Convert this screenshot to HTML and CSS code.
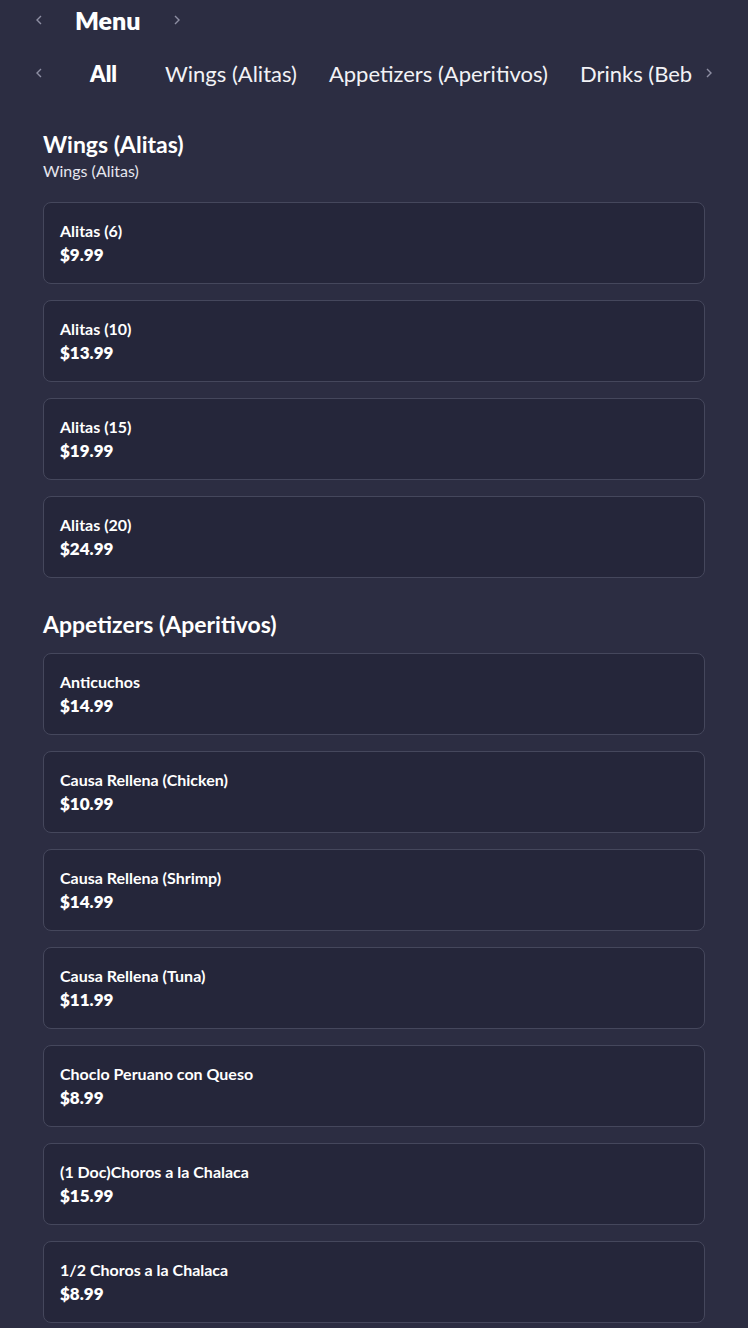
FILE: index.html
```html
<!DOCTYPE html>
<html>
<head>
<meta charset="utf-8">
<link rel="stylesheet" href="styles.css">
</head>
<body>
<div class="page">
  <div class="top">
    <span class="chev"><svg width="8" height="12" viewBox="0 0 8 12"><polyline points="6,2 2,6 6,10" fill="none" stroke="currentColor" stroke-width="1.4"/></svg></span>
    <h1 class="title">Menu</h1>
    <span class="chev"><svg width="8" height="12" viewBox="0 0 8 12"><polyline points="2,2 6,6 2,10" fill="none" stroke="currentColor" stroke-width="1.4"/></svg></span>
  </div>
  <div class="tabs-row">
    <span class="chev"><svg width="8" height="12" viewBox="0 0 8 12"><polyline points="6,2 2,6 6,10" fill="none" stroke="currentColor" stroke-width="1.4"/></svg></span>
    <div class="tabs">
      <span class="tab tab-active">All</span>
      <span class="tab">Wings (Alitas)</span>
      <span class="tab">Appetizers (Aperitivos)</span>
      <span class="tab">Drinks (Bebidas)</span>
    </div>
    <span class="chev"><svg width="8" height="12" viewBox="0 0 8 12"><polyline points="2,2 6,6 2,10" fill="none" stroke="currentColor" stroke-width="1.4"/></svg></span>
  </div>

  <section class="section">
    <h2 class="sec-title">Wings (Alitas)</h2>
    <p class="sec-sub">Wings (Alitas)</p>
    <div class="cards">
      <div class="card"><div class="name">Alitas (6)</div><div class="price">$9.99</div></div>
      <div class="card"><div class="name">Alitas (10)</div><div class="price">$13.99</div></div>
      <div class="card"><div class="name">Alitas (15)</div><div class="price">$19.99</div></div>
      <div class="card"><div class="name">Alitas (20)</div><div class="price">$24.99</div></div>
    </div>
  </section>

  <section class="section">
    <h2 class="sec-title sec-title-nosub">Appetizers (Aperitivos)</h2>
    <div class="cards">
      <div class="card"><div class="name">Anticuchos</div><div class="price">$14.99</div></div>
      <div class="card"><div class="name">Causa Rellena (Chicken)</div><div class="price">$10.99</div></div>
      <div class="card"><div class="name">Causa Rellena (Shrimp)</div><div class="price">$14.99</div></div>
      <div class="card"><div class="name">Causa Rellena (Tuna)</div><div class="price">$11.99</div></div>
      <div class="card"><div class="name">Choclo Peruano con Queso</div><div class="price">$8.99</div></div>
      <div class="card"><div class="name">(1 Doc)Choros a la Chalaca</div><div class="price">$15.99</div></div>
      <div class="card"><div class="name">1/2 Choros a la Chalaca</div><div class="price">$8.99</div></div>
    </div>
  </section>
</div>
</body>
</html>
```

FILE: styles.css
```css
* { box-sizing: border-box; }
html, body {
  margin: 0;
  padding: 0;
  background: #2c2d42;
}
body {
  font-family: "Lato", "Noto Sans", sans-serif;
  color: #ffffff;
  overflow: hidden;
}
.page {
  padding: 0 43px 0 43px;
}
.top {
  display: flex;
  align-items: center;
  height: 40px;
  margin-left: -10px;
}
.chev {
  flex: none;
  display: flex;
  align-items: center;
  justify-content: center;
  width: 12px;
  height: 16px;
  color: #8e8fa3;
}
.title {
  margin: 0 30px 0 30px;
  font-size: 25px;
  font-weight: 800;
  letter-spacing: 0;
}
.tabs-row {
  display: flex;
  align-items: center;
  height: 66px;
  margin: 0 -10px 0 -10px;
}
.tabs {
  flex: 1;
  display: flex;
  overflow: hidden;
  white-space: nowrap;
  margin: 0 11px 0 13px;
}
.tab {
  flex: none;
  padding: 0 16px;
  font-size: 22px;
  font-weight: 400;
  color: #f2f2f6;
}
.tab-active {
  font-weight: 800;
  color: #ffffff;
  padding: 0 32px 0 32px;
}
.section {
  margin-top: 21px;
}
.section + .section {
  margin-top: 29px;
}
.sec-title {
  margin: 0;
  font-size: 23px;
  font-weight: 700;
  line-height: 34px;
}
.sec-sub {
  margin: 0 0 21px 0;
  font-size: 16px;
  font-weight: 400;
  color: #e6e6ee;
  line-height: 20px;
}
.sec-title-nosub {
  margin-bottom: 12px;
}
.cards {
  display: flex;
  flex-direction: column;
  gap: 16px;
}
.card {
  height: 82px;
  background: #25263a;
  border: 1px solid #45475c;
  border-radius: 8px;
  padding: 16px 16px;
}
.name {
  font-size: 16px;
  font-weight: 700;
  line-height: 24px;
}
.price {
  font-size: 17px;
  font-weight: 800;
  line-height: 24px;
}
```
